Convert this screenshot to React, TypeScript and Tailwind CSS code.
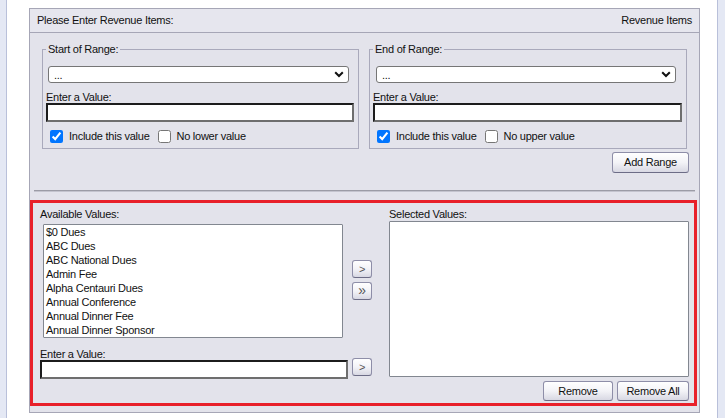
import React from "react";

const items = [
  "$0 Dues",
  "ABC Dues",
  "ABC National Dues",
  "Admin Fee",
  "Alpha Centauri Dues",
  "Annual Conference",
  "Annual Dinner Fee",
  "Annual Dinner Sponsor",
];

function Btn({ children, className }: { children: React.ReactNode; className: string }) {
  return (
    <button
      className={
        "flex shrink-0 items-center justify-center rounded-[3px] border border-[#8e8ea8] border-b-[#6c6c86] bg-linear-to-b from-[#ffffff] via-[#f3f3f7] to-[#d8d8e3] leading-[13px] text-[#111] " +
        className
      }
    >
      {children}
    </button>
  );
}

function Chevron() {
  return (
    <svg width="10" height="7" viewBox="0 0 10 7">
      <path d="M1.2 1.2 L5 5 L8.8 1.2" fill="none" stroke="#111" strokeWidth="2" />
    </svg>
  );
}

function TextBox({ className }: { className: string }) {
  return (
    <input
      type="text"
      className={
        "block h-[19px] border-2 border-t-[#1c1c1c] border-l-[#1c1c1c] border-r-[#6e6e6e] border-b-[#6e6e6e] bg-white outline-none " +
        className
      }
    />
  );
}

function RangeFieldset({
  title,
  other,
  fsClass,
  selClass,
  inClass,
}: {
  title: string;
  other: string;
  fsClass: string;
  selClass: string;
  inClass: string;
}) {
  return (
    <fieldset className={"border border-[#a9a9bb] px-[3px] pb-[5px] " + fsClass}>
      <legend className="px-[2px] leading-[15px]">{title}</legend>
      <div
        className={
          "mt-[9px] flex h-[17px] items-center justify-between rounded-[3px] border border-[#767676] bg-white pl-[5px] pr-[4px] " +
          selClass
        }
      >
        <span className="mt-[1px] leading-[13px]">...</span>
        <Chevron />
      </div>
      <div className="mt-[9px] leading-[11px]">Enter a Value:</div>
      <TextBox className={inClass} />
      <div className="mt-[8px] flex h-[13px] items-center">
        <input type="checkbox" defaultChecked className="m-0 ml-[4px] h-[13px] w-[13px]" />
        <span className="ml-[6px] leading-[13px]">Include this value</span>
        <input type="checkbox" className="m-0 ml-[8px] h-[13px] w-[13px]" />
        <span className="ml-[6px] leading-[13px]">{other}</span>
      </div>
    </fieldset>
  );
}

export default function App() {
  return (
    <div className="flex h-[418px] w-[725px] overflow-hidden bg-white text-[11px] leading-[13px] tracking-[-0.25px] text-[#111] [font-family:'Liberation_Sans',Arial,sans-serif]">
      <div className="w-[7px] shrink-0 border-r border-[#b9c0da] bg-[#e4e8f4]" />
      <div className="flex-1 pl-[22px] pr-[17px] pt-[8px]">
        <div className="h-[405px] w-[671px] border border-[#a6a6b6] bg-[#e3e3eb]">
          <div className="flex h-[24px] items-center justify-between border-b border-[#a6a6b6] bg-[#e6e6ee] px-[7px]">
            <span>Please Enter Revenue Items:</span>
            <span>Revenue Items</span>
          </div>
          <div className="pt-[9px]">
            <div className="flex gap-[10px] pl-[12px]">
              <RangeFieldset
                title="Start of Range:"
                other="No lower value"
                fsClass="w-[317px]"
                selClass="ml-[2px] w-[301px]"
                inClass="w-[308px]"
              />
              <RangeFieldset
                title="End of Range:"
                other="No upper value"
                fsClass="w-[318px]"
                selClass="ml-[3px] w-[300px]"
                inClass="w-[309px]"
              />
            </div>
            <div className="mt-[3px] flex justify-end pr-[10px]">
              <Btn className="h-[21px] w-[77px]">Add Range</Btn>
            </div>
            <div className="mx-[4px] mt-[17px] h-[2px] border-t border-b border-t-[#9c9ca6] border-b-[#c4c4ce]" />
            <div className="mr-[2px] mt-[8px] flex h-[206px] border-[3px] border-[#e8202a] pl-[7px] pr-[5px]">
              <div className="flex w-[308px] shrink-0 flex-col pt-[5px]">
                <div className="leading-[13px]">Available Values:</div>
                <div className="ml-[3px] mt-[3px] h-[114px] w-[300px] rounded-[1px] border border-[#828790] bg-white">
                  {items.map((it) => (
                    <div key={it} className="pl-[2px] leading-[14px]">
                      {it}
                    </div>
                  ))}
                </div>
                <div className="mt-[11px] leading-[11px]">Enter a Value:</div>
                <TextBox className="w-[308px]" />
              </div>
              <div className="ml-[4px] flex w-[20px] shrink-0 flex-col">
                <Btn className="mt-[57px] h-[18px] w-[20px] text-[#555]">&gt;</Btn>
                <Btn className="mt-[4px] h-[18px] w-[20px] pb-[1px] text-[14px] text-[#555]">»</Btn>
                <Btn className="mt-[58px] h-[18px] w-[20px] text-[#555]">&gt;</Btn>
              </div>
              <div className="ml-[17px] flex w-[300px] shrink-0 flex-col pt-[5px]">
                <div className="leading-[13px]">Selected Values:</div>
                <div className="h-[156px] w-[300px] rounded-[1px] border border-[#828790] bg-white" />
                <div className="mt-[4px] flex justify-end gap-[4px]">
                  <Btn className="h-[20px] w-[70px]">Remove</Btn>
                  <Btn className="h-[20px] w-[72px]">Remove All</Btn>
                </div>
              </div>
            </div>
          </div>
        </div>
      </div>
      <div className="w-[8px] shrink-0 border-l border-[#b9c0da] bg-[#e4e8f4]" />
    </div>
  );
}
